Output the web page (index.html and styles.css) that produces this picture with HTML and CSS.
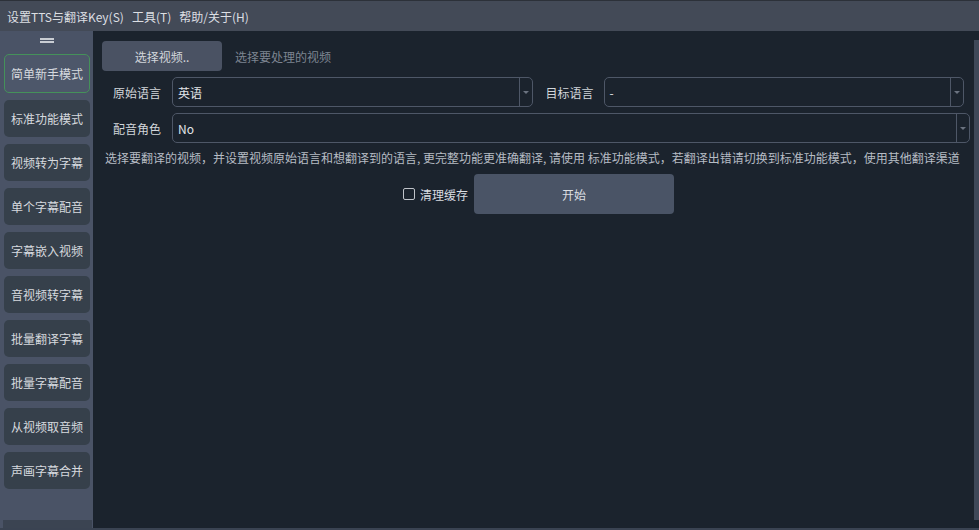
FILE: index.html
```html
<!DOCTYPE html>
<html lang="zh-CN">
<head>
  <meta charset="UTF-8">
  <title>视频翻译配音</title>
  <link rel="stylesheet" href="styles.css">
</head>
<body>

  <!-- 菜单栏 -->
  <div class="menubar">
    <span class="menu">设置TTS与翻译Key(S)</span>
    <span class="menu">工具(T)</span>
    <span class="menu">帮助/关于(H)</span>
  </div>

  <div class="workspace">
    <!-- 左侧模式切换 -->
    <div class="sidebar">
      <div class="handle"><span></span><span></span></div>
      <button class="mode active">简单新手模式</button>
      <button class="mode">标准功能模式</button>
      <button class="mode">视频转为字幕</button>
      <button class="mode">单个字幕配音</button>
      <button class="mode">字幕嵌入视频</button>
      <button class="mode">音视频转字幕</button>
      <button class="mode">批量翻译字幕</button>
      <button class="mode">批量字幕配音</button>
      <button class="mode">从视频取音频</button>
      <button class="mode">声画字幕合并</button>
      <div class="spacer"></div>
      <div class="sidebar-foot"></div>
    </div>

    <!-- 主区域 -->
    <div class="main">
      <div class="content">
        <div class="row">
          <button class="btn pick">选择视频..</button>
          <span class="hint">选择要处理的视频</span>
        </div>

        <div class="row fields">
          <label class="label">原始语言</label>
          <div class="combo"><span class="value">英语</span><span class="arrow"></span></div>
          <label class="label second">目标语言</label>
          <div class="combo"><span class="value">-</span><span class="arrow"></span></div>
        </div>

        <div class="row fields wide">
          <label class="label">配音角色</label>
          <div class="combo"><span class="value">No</span><span class="arrow"></span></div>
        </div>

        <p class="desc">选择要翻译的视频，并设置视频原始语言和想翻译到的语言, 更完整功能更准确翻译, 请使用 标准功能模式，若翻译出错请切换到标准功能模式，使用其他翻译渠道</p>

        <div class="actions">
          <label class="check"><span class="box"></span>清理缓存</label>
          <button class="btn start">开始</button>
        </div>
      </div>
      <div class="scrollbar"></div>
    </div>
  </div>

  <div class="statusline"></div>

</body>
</html>
```

FILE: styles.css
```css
body {
  margin: 0;
  width: 979px;
  height: 530px;
  overflow: hidden;
  background: #1b232d;
  font-family: "Noto Sans CJK SC", "Noto Sans", sans-serif;
  font-size: 12px;
  color: #d2d6db;
}
button {
  font-family: inherit;
  font-size: 12px;
  border: none;
  cursor: pointer;
}

.menubar {
  height: 30px;
  border-top: 1px solid #2c3139;
  background: #434a57;
  display: flex;
  align-items: center;
  gap: 8px;
  padding-left: 7px;
  color: #dcdfe3;
}

.workspace {
  display: flex;
  height: 497px;
}

.sidebar {
  width: 93px;
  background: #4a5366;
  display: flex;
  flex-direction: column;
  align-items: center;
}
.handle {
  height: 23px;
  display: flex;
  flex-direction: column;
  align-items: center;
  padding-top: 7px;
  box-sizing: border-box;
  gap: 1px;
}
.handle span {
  display: block;
  width: 14px;
  height: 2px;
  background: #c9cdd3;
}
.mode {
  width: 86px;
  height: 37px;
  margin-bottom: 7px;
  border-radius: 5px;
  background: #36404b;
  color: #d6dadf;
  padding: 0;
  margin-left: 1px;
}
.mode.active {
  height: 39px;
  background: #4d576a;
  border: 1px solid #45915a;
}
.spacer {
  flex: 1;
}
.sidebar-foot {
  align-self: stretch;
  height: 8px;
  margin: 0 1px 0 3px;
  background: #3b4452;
}

.main {
  flex: 1;
  display: flex;
}
.content {
  flex: 1;
  padding: 10px 4px 0 9px;
}
.scrollbar {
  width: 5px;
  margin: 9px 0 8px;
  background: #3f4858;
}

.row {
  display: flex;
  align-items: center;
  height: 30px;
  margin-bottom: 6px;
}
.btn {
  border-radius: 4px;
  color: #d2d6db;
}
.pick {
  width: 120px;
  height: 30px;
  background: #4a5263;
}
.hint {
  margin-left: 13px;
  color: #7d8591;
}

.fields {
  padding-left: 11px;
  margin-right: 6px;
}
.fields.wide {
  margin-right: 0;
}
.label {
  width: 48px;
  margin-right: 11px;
  white-space: nowrap;
}
.label.second {
  width: 47px;
  margin-left: 13px;
}
.combo {
  flex: 1;
  height: 30px;
  box-sizing: border-box;
  border: 1px solid #4e5767;
  border-radius: 5px;
  display: flex;
  align-items: center;
  color: #e2e5e8;
}
.value {
  flex: 1;
  padding-left: 5px;
}
.arrow {
  width: 12px;
  align-self: stretch;
  border-left: 1px solid #4e5767;
  display: flex;
  align-items: center;
  justify-content: center;
}
.arrow::after {
  content: "";
  border-left: 3px solid transparent;
  border-right: 3px solid transparent;
  border-top: 3px solid #6b7380;
}

.desc {
  margin: 7px 0 0 3px;
  line-height: 16px;
  white-space: nowrap;
  color: #b6bcc4;
}

.actions {
  display: flex;
  align-items: center;
  justify-content: center;
  margin-top: 8px;
  padding-left: 5px;
}
.check {
  display: flex;
  align-items: center;
  gap: 5px;
  margin-right: 6px;
  color: #d8dce1;
}
.box {
  width: 10px;
  height: 10px;
  border: 1px solid #c0c4ca;
  border-radius: 2px;
}
.start {
  width: 200px;
  height: 40px;
  background: #4a5466;
  color: #dcdfe3;
}

.statusline {
  height: 2px;
  background: #3a4352;
}
```
